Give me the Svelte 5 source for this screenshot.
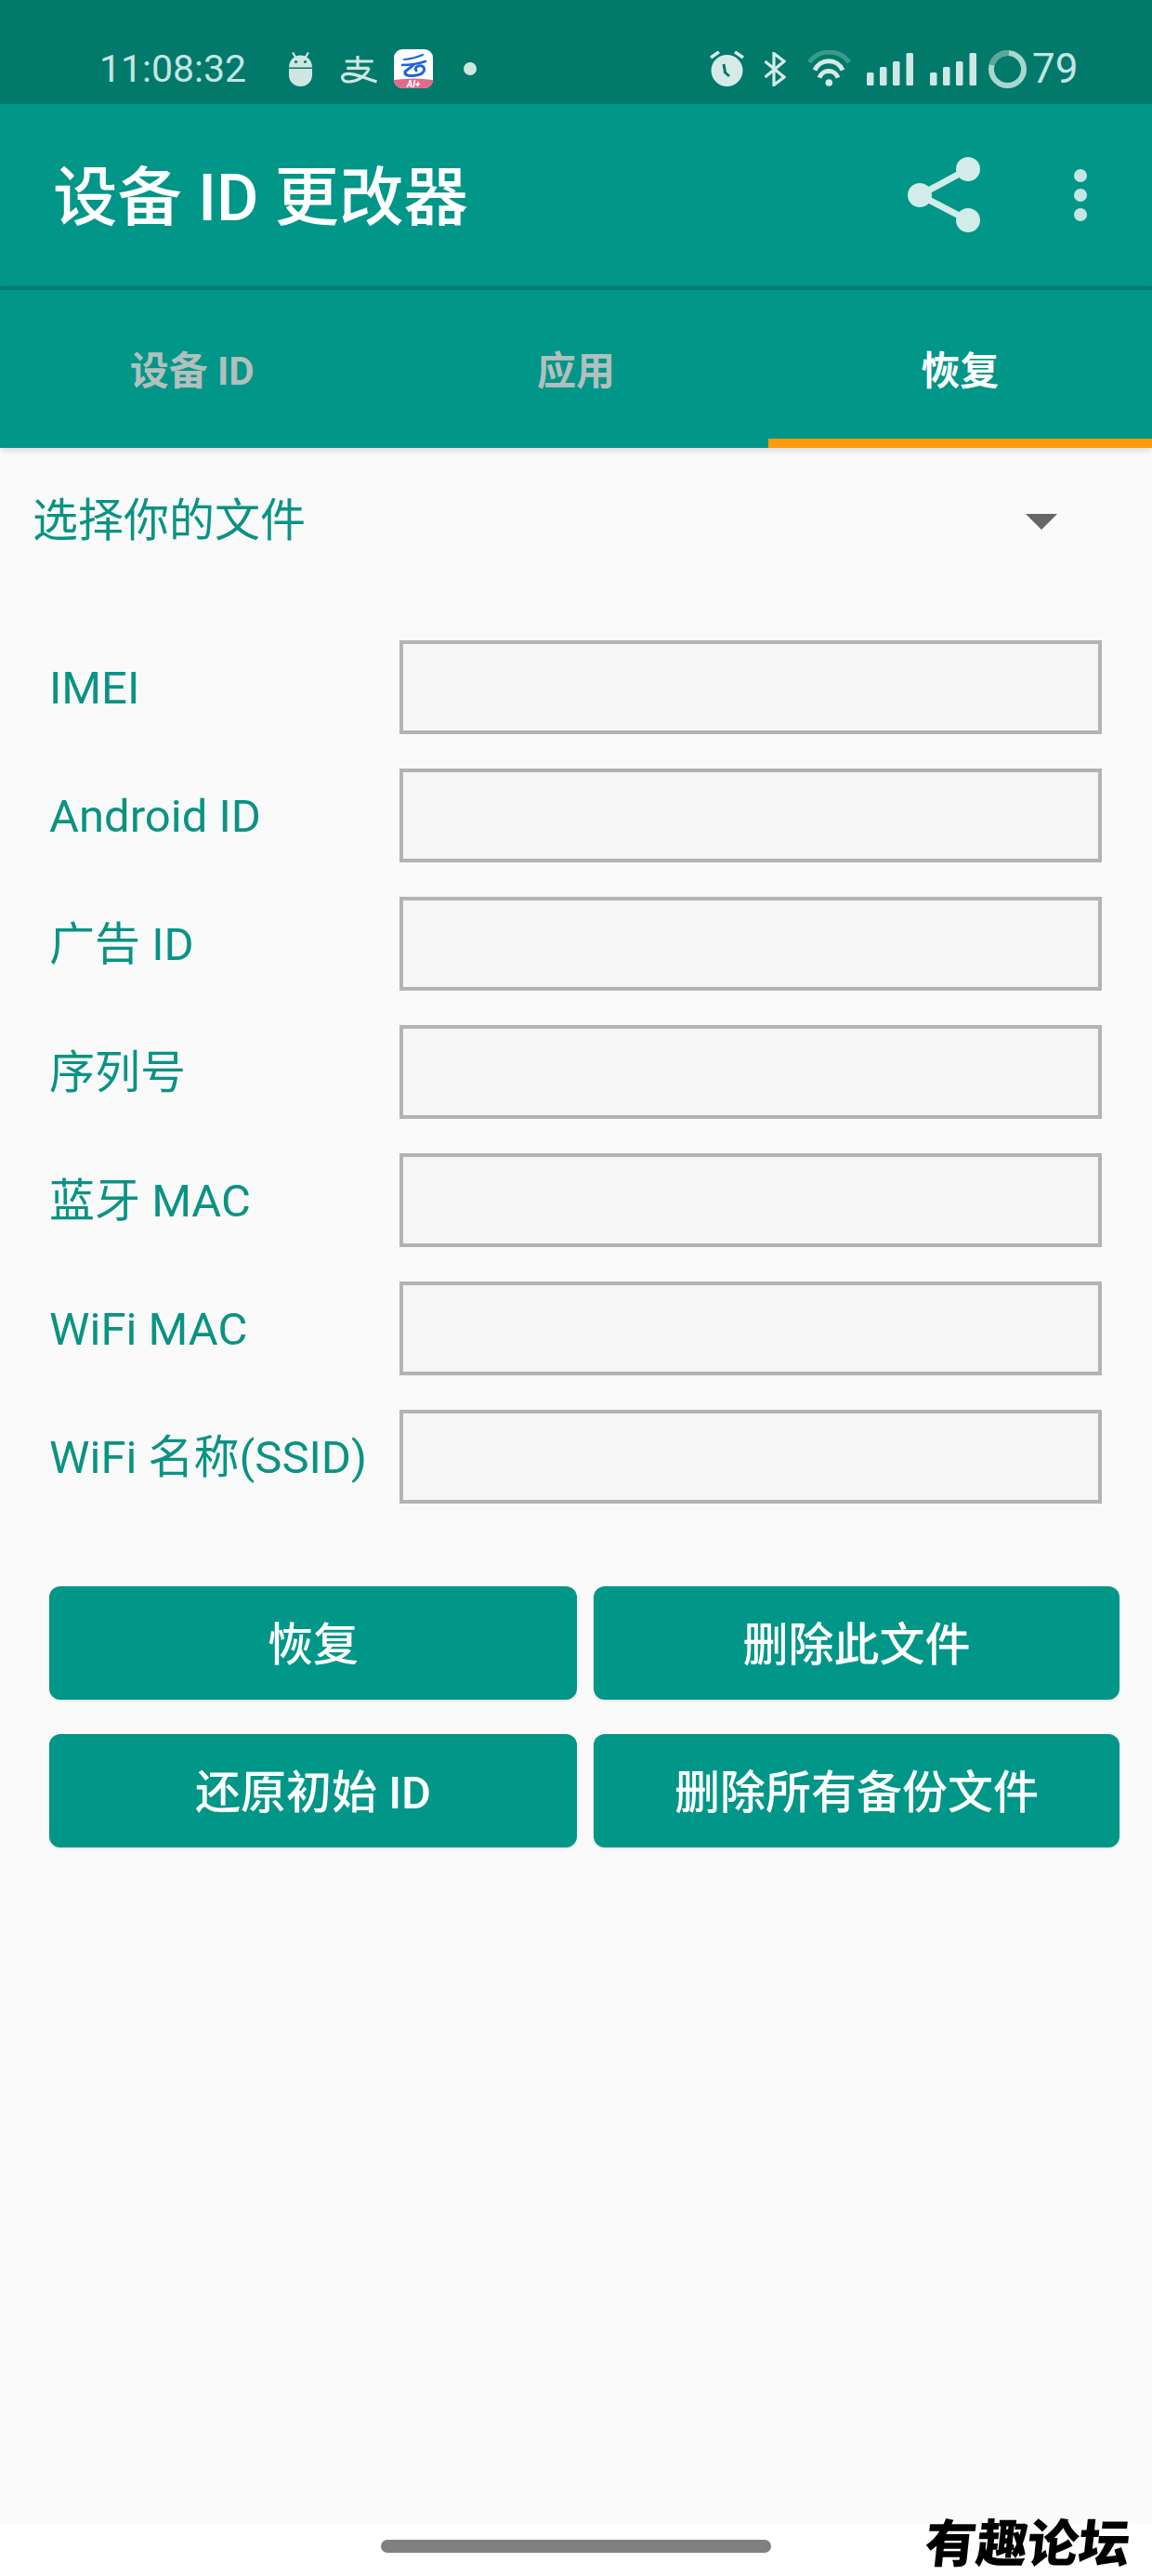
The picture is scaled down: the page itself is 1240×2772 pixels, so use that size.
<script>
  const fields = ['IMEI', 'Android ID', '广告 ID', '序列号', '蓝牙 MAC', 'WiFi MAC', 'WiFi 名称(SSID)'];
  const tabs = ['设备 ID', '应用', '恢复'];
  const buttons = ['恢复', '删除此文件', '还原初始 ID', '删除所有备份文件'];
</script>

<div class="page">
  <header class="status">
    <span class="time">11:08:32</span>
    <svg class="i-android" width="25" height="37" viewBox="0 0 25 37">
      <path d="M4 .5 7.5 6M21 .5 17.500 6" stroke="#cfe6e2" stroke-width="2.200" fill="none" />
      <path d="M0 16.500C0 9 5.500 3.500 12.500 3.500S25 9 25 16.500Z" fill="#cfe6e2" />
      <circle cx="7.500" cy="10.500" r="1.600" fill="#01796b" />
      <circle cx="17.500" cy="10.500" r="1.600" fill="#01796b" />
      <path d="M0 18H25V25A12.500 12 0 0 1 0 25Z" fill="#cfe6e2" />
    </svg>
    <svg class="i-ali" width="40" height="32" viewBox="0 0 40 32" fill="none" stroke="#cfe6e2" stroke-width="3.200">
      <path d="M5.700 8H35.700M19 2V15.300M7.300 15.300H31.300" />
      <path d="M31.300 15.300C28 24 18 30 9 30 2 30 1 24 5 22 12 19 26 26 39.500 30" />
    </svg>
    <svg class="i-app" width="42" height="42" viewBox="0 0 42 42">
      <rect width="42" height="42" rx="9" fill="#fff" />
      <path d="M0 33Q21 30 42 33V33A9 9 0 0 1 33 42H9A9 9 0 0 1 0 33Z" fill="#e2688c" />
      <text x="21" y="41" text-anchor="middle" class="ai">AI+</text>
      <g fill="none" stroke="#1f66d6" stroke-linecap="round">
        <path d="M11 11Q22 10 31 6" stroke-width="2.200" />
        <path d="M9 17Q22 17 34 13" stroke-width="2.600" />
        <path d="M21 17 12 24C11 29 18 29 24 28 33 27 35 20 30 18 25 17 22 20 24 23" stroke-width="3" />
      </g>
    </svg>
    <span class="dot"></span>
    <span class="spacer"></span>
    <svg class="i-alarm" width="37" height="38" viewBox="0 0 37 38">
      <circle cx="18.500" cy="21" r="17" fill="#d6ebe8" />
      <path d="M1 7 10 .8M36 7 27 .8" stroke="#d6ebe8" stroke-width="3.600" fill="none" />
      <path d="M15 14 16.500 23 21 27" stroke="#01796b" stroke-width="3" fill="none" />
    </svg>
    <svg class="i-bt" width="24" height="37" viewBox="0 0 24 37" fill="none" stroke="#d6ebe8" stroke-width="3.200">
      <path d="M1.500 10 22 27 11 35.500V1.500L22 10 1.500 27" />
    </svg>
    <svg class="i-wifi" width="47" height="40" viewBox="0 0 47 40" fill="none" stroke-width="5">
      <path d="M2 13A26.500 26.500 0 0 1 45 13" stroke="#3a9a8c" />
      <path d="M8 21.600A16.300 16.300 0 0 1 38 21.600" stroke="#d6ebe8" />
      <path d="M13 29.600A10.600 10.600 0 0 1 33 29.600" stroke="#d6ebe8" />
      <circle cx="23.300" cy="35" r="3.800" fill="#d6ebe8" />
    </svg>
    <svg class="i-sig" width="50" height="35" viewBox="0 0 50 35" fill="#d0e8e4">
      <rect x="0" y="21" width="7.500" height="14" rx="1.500" />
      <rect x="14" y="15" width="7.500" height="20" rx="1.500" />
      <rect x="28" y="9" width="7.500" height="26" rx="1.500" />
      <rect x="42.500" y="0" width="7.500" height="35" rx="1.500" />
    </svg>
    <svg class="i-sig2" width="50" height="35" viewBox="0 0 50 35" fill="#d0e8e4">
      <rect x="0" y="21" width="7.500" height="14" rx="1.500" />
      <rect x="14" y="15" width="7.500" height="20" rx="1.500" />
      <rect x="28" y="9" width="7.500" height="26" rx="1.500" />
      <rect x="42.500" y="0" width="7.500" height="35" rx="1.500" />
    </svg>
    <svg class="i-ring" width="41" height="41" viewBox="0 0 41 41" fill="none" stroke-width="6">
      <circle cx="20.500" cy="20.500" r="17.500" stroke="#a9d6cf" />
      <circle cx="20.500" cy="20.500" r="17.500" stroke="#5aa89c" stroke-dasharray="24 110" transform="rotate(-165 20.500 20.500)" />
    </svg>
    <span class="batt">79</span>
  </header>

  <div class="appbar">
    <h1>设备 ID 更改器</h1>
    <svg class="share" width="78" height="82" viewBox="0 0 78 82">
      <path d="M65 13 13 41 65 68" fill="none" stroke="#d2ecea" stroke-width="7" />
      <circle cx="65" cy="13" r="13" fill="#d2ecea" />
      <circle cx="13" cy="41" r="13" fill="#d2ecea" />
      <circle cx="65" cy="68" r="13" fill="#d2ecea" />
    </svg>
    <svg class="more" width="14" height="56" viewBox="0 0 14 56" fill="#c5e5e2">
      <circle cx="7" cy="7" r="7" />
      <circle cx="7" cy="28" r="7" />
      <circle cx="7" cy="49" r="7" />
    </svg>
  </div>

  <nav class="tabs">
    {#each tabs as t, i}
      <div class="tab" class:active={i === 2}>{t}</div>
    {/each}
  </nav>

  <main>
    <div class="spinner">
      <span>选择你的文件</span>
      <svg width="34" height="17" viewBox="0 0 34 17"><path d="M0 0H34L17 17Z" fill="#666" /></svg>
    </div>

    <div class="form">
      {#each fields as f}
        <div class="row">
          <span class="label">{f}</span>
          <div class="input"></div>
        </div>
      {/each}
    </div>

    <div class="buttons">
      {#each buttons as b}
        <div class="btn">{b}</div>
      {/each}
    </div>
  </main>

  <footer class="navbar">
    <div class="handle"></div>
    <span class="mark">有趣论坛</span>
  </footer>
</div>

<style>
  :global(body) {
    margin: 0;
    background: #fafafa;
  }
  .page {
    width: 1240px;
    height: 2772px;
    display: flex;
    flex-direction: column;
    font-family: Roboto, "Noto Sans CJK SC", sans-serif;
    position: relative;
    overflow: hidden;
  }
  .status {
    height: 112px;
    box-sizing: border-box;
    padding: 36px 80px 0 107px;
    display: flex;
    align-items: center;
    background: #01796b;
    flex: none;
  }
  .time {
    font-size: 41px;
    line-height: 48px;
    color: #c5e5e2;
    width: 157px;
    white-space: nowrap;
    flex: none;
  }
  .status svg { flex: none; display: block; }
  .i-android { margin-left: 47px; }
  .i-ali { margin-left: 30px; }
  .i-app { margin-left: 18px; }
  .ai {
    font: italic 700 10px Roboto, sans-serif;
    fill: #fff;
  }
  .dot {
    width: 14px;
    height: 14px;
    border-radius: 50%;
    background: #cfe6e2;
    margin-left: 33px;
    flex: none;
  }
  .spacer { flex: 1; }
  .i-bt { margin-left: 21px; }
  .i-wifi { margin-left: 23px; }
  .i-sig { margin-left: 17px; }
  .i-sig2 { margin-left: 18px; }
  .i-ring { margin-left: 13px; }
  .batt {
    font-size: 44px;
    line-height: 48px;
    color: #c5e5e2;
    margin-left: 6px;
    width: 49px;
  }
  .appbar {
    height: 196px;
    flex: none;
    display: flex;
    align-items: center;
    box-sizing: border-box;
    padding: 0 70px 0 57px;
    background: #009688;
  }
  h1 {
    flex: 1;
    margin: 8px 0 0;
    font-size: 69.5px;
    line-height: 80px;
    font-weight: 500;
    color: #fff;
  }
  .more { margin-left: 101px; }
  .tabs {
    height: 170px;
    flex: none;
    display: grid;
    grid-template-columns: repeat(3, 1fr);
    background: #009688;
    border-top: 4px solid #00796b;
    box-shadow: 0 3px 6px rgba(0, 0, 0, 0.12);
    position: relative;
  }
  .tab {
    display: flex;
    align-items: center;
    justify-content: center;
    font-size: 42px;
    line-height: 50px;
    font-weight: 700;
    color: #b2bfbd;
    box-sizing: border-box;
    border-bottom: 10px solid transparent;
    padding-top: 16px;
  }
  .tab.active {
    color: #fff;
    border-bottom-color: #ff9a0c;
  }
  main {
    flex: 1;
    display: flex;
    flex-direction: column;
  }
  .spinner {
    height: 158px;
    flex: none;
    display: flex;
    align-items: center;
    justify-content: space-between;
    box-sizing: border-box;
    padding: 0 102px 0 35px;
    font-size: 49px;
    line-height: 56px;
    color: #0a9383;
  }
  .form {
    display: flex;
    flex-direction: column;
    gap: 37px;
    padding: 49px 54px 0 53px;
  }
  .row {
    display: flex;
    align-items: center;
    height: 101px;
  }
  .label {
    width: 377px;
    flex: none;
    white-space: nowrap;
    font-size: 49px;
    line-height: 56px;
    padding-top: 3px;
    color: #0a9383;
  }
  .input {
    flex: 1;
    height: 100%;
    box-sizing: border-box;
    background: #f6f6f6;
    border: 4px solid #b3b3b3;
  }
  .buttons {
    display: grid;
    grid-template-columns: 568px 566px;
    column-gap: 18px;
    row-gap: 37px;
    margin: 89px 35px 0 53px;
  }
  .btn {
    height: 122px;
    box-sizing: border-box;
    padding-top: 5px;
    display: flex;
    align-items: center;
    justify-content: center;
    background: #009688;
    color: #fff;
    font-size: 49px;
    line-height: 56px;
    font-weight: 500;
    border-radius: 12px;
    box-shadow: 0 1px 3px rgba(0, 0, 0, 0.12);
  }
  .navbar {
    height: 56px;
    flex: none;
    background: #fff;
    display: flex;
    justify-content: center;
    padding-top: 17px;
    box-sizing: border-box;
    position: relative;
  }
  .handle {
    width: 420px;
    height: 14px;
    border-radius: 7px;
    background: #808080;
  }
  .mark {
    position: absolute;
    left: 996px;
    top: -10px;
    font-size: 55px;
    line-height: 64px;
    font-weight: 900;
    color: #000;
    white-space: nowrap;
    transform: skewX(-6deg);
  }
</style>
